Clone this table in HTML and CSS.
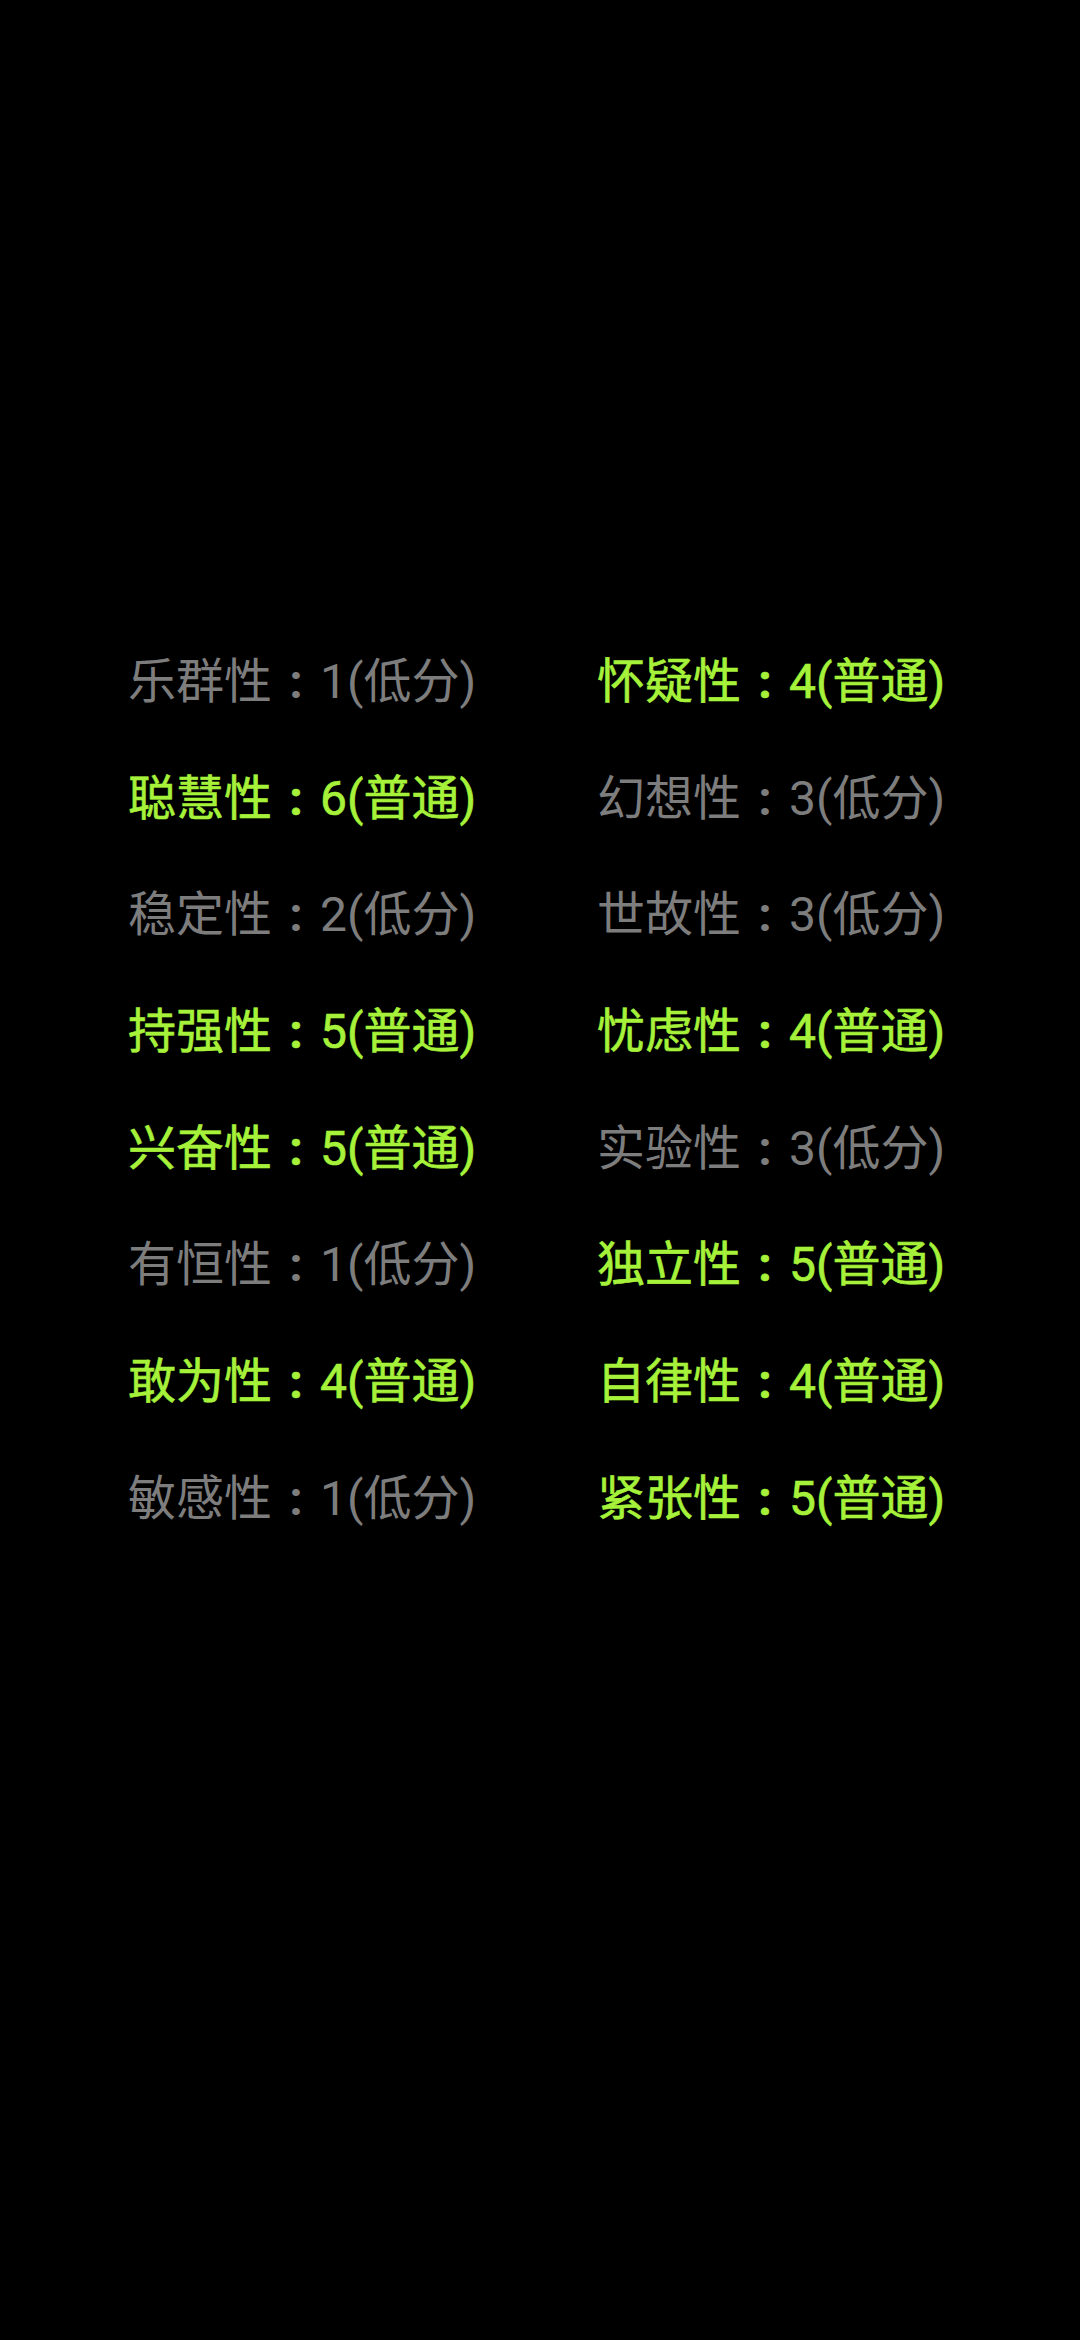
FILE: index.html
```html
<!DOCTYPE html>
<html lang="zh-CN">
<head>
  <meta charset="UTF-8">
  <title>性格因素</title>
  <link rel="stylesheet" href="styles.css">
</head>
<body>

  <div class="factor-grid">
    <div class="factor low">乐群性<span class="sep">:</span>1(低分)</div>
    <div class="factor mid">怀疑性<span class="sep">:</span>4(普通)</div>

    <div class="factor mid">聪慧性<span class="sep">:</span>6(普通)</div>
    <div class="factor low">幻想性<span class="sep">:</span>3(低分)</div>

    <div class="factor low">稳定性<span class="sep">:</span>2(低分)</div>
    <div class="factor low">世故性<span class="sep">:</span>3(低分)</div>

    <div class="factor mid">持强性<span class="sep">:</span>5(普通)</div>
    <div class="factor mid">忧虑性<span class="sep">:</span>4(普通)</div>

    <div class="factor mid">兴奋性<span class="sep">:</span>5(普通)</div>
    <div class="factor low">实验性<span class="sep">:</span>3(低分)</div>

    <div class="factor low">有恒性<span class="sep">:</span>1(低分)</div>
    <div class="factor mid">独立性<span class="sep">:</span>5(普通)</div>

    <div class="factor mid">敢为性<span class="sep">:</span>4(普通)</div>
    <div class="factor mid">自律性<span class="sep">:</span>4(普通)</div>

    <div class="factor low">敏感性<span class="sep">:</span>1(低分)</div>
    <div class="factor mid">紧张性<span class="sep">:</span>5(普通)</div>
  </div>

</body>
</html>
```

FILE: styles.css
```css
html, body {
  margin: 0;
  background: #000;
}

body {
  font-family: Roboto, "Noto Sans CJK SC", sans-serif;
  min-height: 2340px;
}

.factor-grid {
  display: grid;
  grid-template-columns: 469px 1fr;
  grid-auto-rows: 116.67px;
  padding: 624px 0 0 128px;
}

.factor {
  font-size: 48px;
  line-height: 116.67px;
  white-space: nowrap;
}

/* full-width slot with the colon centred in it */
.sep {
  display: inline-block;
  width: 1em;
  text-align: center;
  font-weight: bold;
}

.factor.low {
  color: #7d7d7d;
}

.factor.mid {
  color: #a6f23a;
  -webkit-text-stroke: 0.6px #a6f23a;
}
```
